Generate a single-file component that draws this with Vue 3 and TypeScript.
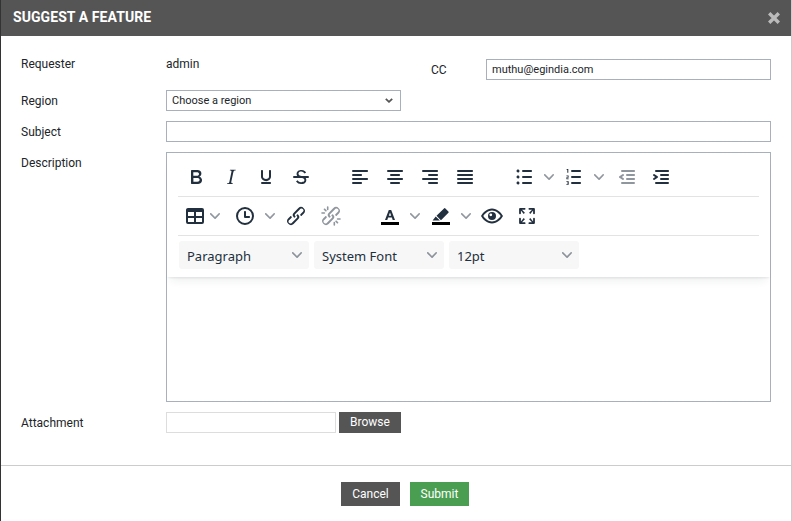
<script setup lang="ts">
interface Tool {
  d: string
  extra?: string
  bar?: boolean
  kind?: 'split' | 'menu'
  disabled?: boolean
  cls?: string
}

const chevron =
  'M8.7 2.2c.3-.3.8-.3 1 0 .4.4.4.9 0 1.2L5.7 7.8c-.3.3-.9.3-1.2 0L.2 3.4a.8.8 0 0 1 0-1.2c.3-.3.8-.3 1.1 0L5 6l3.7-3.8z'

const chain =
  'M6.2 12.3a1 1 0 0 1 1.4 1.4l-2 2a2 2 0 1 0 2.6 2.8l4.8-4.8a1 1 0 0 0 0-1.4 1 1 0 1 1 1.4-1.3 2.9 2.9 0 0 1 0 4L9.6 20a3.9 3.9 0 0 1-5.5-5.5l2-2zm11.6-.6a1 1 0 0 1-1.4-1.4l2-2a2 2 0 1 0-2.6-2.8L11 10.3a1 1 0 0 0 0 1.4 1 1 0 1 1-1.4 1.3 2.9 2.9 0 0 1 0-4L14.4 4a3.9 3.9 0 0 1 5.5 5.5l-2 2z'

const indentLines =
  'M7 5h12c.6 0 1 .4 1 1s-.4 1-1 1H7a1 1 0 1 1 0-2zm5 4h7c.6 0 1 .4 1 1s-.4 1-1 1h-7a1 1 0 0 1 0-2zm0 4h7c.6 0 1 .4 1 1s-.4 1-1 1h-7a1 1 0 0 1 0-2zm-5 4h12a1 1 0 0 1 0 2H7a1 1 0 0 1 0-2z'

const firstRow: { tight?: boolean; tools: Tool[] }[] = [
  {
    tools: [
      { d: 'M7.8 19c-.3 0-.5 0-.6-.2l-.2-.5V5.7c0-.2 0-.4.2-.5l.6-.2h5c1.5 0 2.7.3 3.5 1 .7.6 1.1 1.4 1.1 2.5a3 3 0 0 1-.6 1.9c-.4.6-1 1-1.6 1.2.4.1.9.3 1.3.6s.8.7 1 1.2c.4.4.5 1 .5 1.6 0 1.3-.4 2.3-1.3 3-.8.7-2.1 1-3.8 1H7.8zm5-8.3c.6 0 1.2-.1 1.6-.5.4-.3.6-.7.6-1.3 0-1.1-.8-1.7-2.4-1.7H9.3v3.5h3.4zm.5 6c.7 0 1.3-.1 1.7-.4.4-.4.6-.9.6-1.5s-.2-1-.7-1.4c-.4-.3-1-.4-2-.4H9.4v3.8h4z' },
      { d: 'M16.7 4.7l-.1.9h-.3c-.6 0-1 0-1.4.3-.3.3-.4.6-.5 1.1l-2.1 9.8v.6c0 .5.4.8 1.4.8h.2l-.2.8H8l.2-.8h.2c1.1 0 1.8-.5 2-1.5l2-9.8.1-.5c0-.6-.4-.8-1.4-.8h-.3l.2-.9h5.8z' },
      { d: 'M16 5c.6 0 1 .4 1 1v5.5a4 4 0 0 1-.4 1.8l-1 1.4a5.3 5.3 0 0 1-5.5 1 5 5 0 0 1-1.6-1c-.5-.4-.8-.9-1.1-1.4a4 4 0 0 1-.4-1.8V6c0-.6.4-1 1-1s1 .4 1 1v5.5c0 .3 0 .6.2 1l.6.7a3.3 3.3 0 0 0 2.2.8 3.4 3.4 0 0 0 2.2-.8c.3-.2.4-.5.6-.8l.2-.9V6c0-.6.4-1 1-1zM8 17h8c.6 0 1 .4 1 1s-.4 1-1 1H8a1 1 0 0 1 0-2z' },
      {
        d: 'M15.6 8.5c-.5-.7-1-1.1-1.3-1.3-.6-.4-1.3-.6-2-.6-2.7 0-2.8 1.7-2.8 2.1 0 1.6 1.8 2 3.2 2.3 4.4.9 4.6 2.8 4.6 3.9 0 1.4-.7 4.1-5 4.1A6.2 6.2 0 0 1 7 16.4l1.5-1.1c.4.6 1.6 2 3.7 2 1.6 0 2.5-.4 3-1.2.4-.8.3-2-.8-2.6-.7-.4-1.6-.7-2.9-1-1-.2-3.9-.8-3.9-3.6C7.6 6 10.3 5 12.4 5c2.9 0 4.2 1.6 4.7 2.4l-1.5 1.1z',
        extra: 'M5 11h14a1 1 0 0 1 0 2H5a1 1 0 0 1 0-2z',
      },
    ],
  },
  {
    tools: [
      { d: 'M5 5h14c.6 0 1 .4 1 1s-.4 1-1 1H5a1 1 0 1 1 0-2zm0 4h8c.6 0 1 .4 1 1s-.4 1-1 1H5a1 1 0 1 1 0-2zm0 8h8c.6 0 1 .4 1 1s-.4 1-1 1H5a1 1 0 0 1 0-2zm0-4h14c.6 0 1 .4 1 1s-.4 1-1 1H5a1 1 0 0 1 0-2z' },
      { d: 'M5 5h14c.6 0 1 .4 1 1s-.4 1-1 1H5a1 1 0 1 1 0-2zm3 4h8c.6 0 1 .4 1 1s-.4 1-1 1H8a1 1 0 1 1 0-2zm0 8h8c.6 0 1 .4 1 1s-.4 1-1 1H8a1 1 0 0 1 0-2zm-3-4h14c.6 0 1 .4 1 1s-.4 1-1 1H5a1 1 0 0 1 0-2z' },
      { d: 'M5 5h14c.6 0 1 .4 1 1s-.4 1-1 1H5a1 1 0 1 1 0-2zm6 4h8c.6 0 1 .4 1 1s-.4 1-1 1h-8a1 1 0 0 1 0-2zm0 8h8c.6 0 1 .4 1 1s-.4 1-1 1h-8a1 1 0 0 1 0-2zm-6-4h14c.6 0 1 .4 1 1s-.4 1-1 1H5a1 1 0 0 1 0-2z' },
      { d: 'M5 5h14c.6 0 1 .4 1 1s-.4 1-1 1H5a1 1 0 1 1 0-2zm0 4h14c.6 0 1 .4 1 1s-.4 1-1 1H5a1 1 0 1 1 0-2zm0 4h14c.6 0 1 .4 1 1s-.4 1-1 1H5a1 1 0 0 1 0-2zm0 4h14c.6 0 1 .4 1 1s-.4 1-1 1H5a1 1 0 0 1 0-2z' },
    ],
  },
  {
    tight: true,
    tools: [
      { kind: 'split', d: 'M11 5h8c.6 0 1 .4 1 1s-.4 1-1 1h-8a1 1 0 0 1 0-2zm0 6h8c.6 0 1 .4 1 1s-.4 1-1 1h-8a1 1 0 0 1 0-2zm0 6h8c.6 0 1 .4 1 1s-.4 1-1 1h-8a1 1 0 0 1 0-2zM4.5 6c0-.4.1-.8.4-1 .3-.4.7-.5 1.1-.5.4 0 .8.1 1 .4.4.3.5.7.5 1.1 0 .4-.1.8-.4 1-.3.4-.7.5-1.1.5-.4 0-.8-.1-1-.4-.4-.3-.5-.7-.5-1.1zm0 6c0-.4.1-.8.4-1 .3-.4.7-.5 1.1-.5.4 0 .8.1 1 .4.4.3.5.7.5 1.1 0 .4-.1.8-.4 1-.3.4-.7.5-1.1.5-.4 0-.8-.1-1-.4-.4-.3-.5-.7-.5-1.1zm0 6c0-.4.1-.8.4-1 .3-.4.7-.5 1.1-.5.4 0 .8.1 1 .4.4.3.5.7.5 1.1 0 .4-.1.8-.4 1-.3.4-.7.5-1.1.5-.4 0-.8-.1-1-.4-.4-.3-.5-.7-.5-1.1z' },
      { kind: 'split', d: 'M10 17h8c.6 0 1 .4 1 1s-.4 1-1 1h-8a1 1 0 0 1 0-2zm0-6h8c.6 0 1 .4 1 1s-.4 1-1 1h-8a1 1 0 0 1 0-2zm0-6h8c.6 0 1 .4 1 1s-.4 1-1 1h-8a1 1 0 1 1 0-2zM5.3 4h1v3.8h-1V5h-.8v-.6zM4.4 10.6h2.2v2.2H5.3v.8h1.4v.6H4.4v-2h1.3v-1H4.4zM4.4 16.2h2.3v3.6H4.4v-.7h1.3v-.8H4.9v-.6h.8v-.8H4.4z' },
      { disabled: true, cls: 'after-gap', d: indentLines + 'm1.6-3.8a1 1 0 0 1-1.2 1.6l-3-2a1 1 0 0 1 0-1.6l3-2a1 1 0 0 1 1.2 1.6L6.8 12l1.8 1.2z' },
      { d: indentLines + 'm-2.6-3.8L6.2 12l-1.8-1.2a1 1 0 0 1 1.2-1.6l3 2a1 1 0 0 1 0 1.6l-3 2a1 1 0 1 1-1.2-1.6z' },
    ],
  },
]

const secondRow: { tight?: boolean; tools: Tool[] }[] = [
  {
    tools: [
      { kind: 'menu', d: 'M19 4a2 2 0 0 1 2 2v12a2 2 0 0 1-2 2H5a2 2 0 0 1-2-2V6c0-1.1.9-2 2-2h14zM5 14v4h6v-4H5zm14 0h-6v4h6v-4zm0-6h-6v4h6V8zM5 12h6V8H5v4z' },
      { kind: 'split', d: 'M12 3a9 9 0 1 1 0 18 9 9 0 0 1 0-18zm0 2a7 7 0 1 0 0 14 7 7 0 0 0 0-14zM17 13c0 .6-.4 1-1 1h-4a1 1 0 0 1-1-1V8c0-.6.4-1 1-1s1 .4 1 1v4h3c.6 0 1 .4 1 1z' },
      { d: chain },
      {
        disabled: true,
        d: chain,
        extra: 'M7.6 6.3a.8.8 0 0 1-1.1 1.1L4.8 5.7a.8.8 0 0 1 1.1-1.1l1.7 1.7zM9.5 3v2.4a.8.8 0 0 1-1.6 0V3a.8.8 0 0 1 1.6 0zM3 8.2h2.4a.8.8 0 0 1 0 1.6H3a.8.8 0 0 1 0-1.6zM16.4 17.7a.8.8 0 0 1 1.1-1.1l1.7 1.7a.8.8 0 0 1-1.1 1.1l-1.7-1.7zM14.5 21v-2.4a.8.8 0 0 1 1.6 0V21a.8.8 0 0 1-1.6 0zM21 15.8h-2.4a.8.8 0 0 1 0-1.6H21a.8.8 0 0 1 0 1.6z',
      },
    ],
  },
  {
    tools: [
      { kind: 'split', bar: true, d: 'M7 16L10.8 6h2.4L17 16h-2.3l-.8-2.4h-3.8L9.3 16zM10.8 11.7h2.4L12 8.4z' },
      { kind: 'split', bar: true, d: 'M15 4.4a1 1 0 0 1 1.4 0l3 3a1 1 0 0 1 0 1.4l-7.4 7.4-4.5-4.5zM6.7 12.4l4.2 4.2H3.6z' },
      { d: 'M12 4.5C7 4.5 3 8.5 1 12c2 3.5 6 7.5 11 7.5s9-4 11-7.5c-2-3.5-6-7.5-11-7.5zm0 2c3.8 0 7 3 8.7 5.5-1.7 2.5-4.9 5.5-8.7 5.5S5 14.5 3.3 12C5 9.5 8.2 6.5 12 6.5zM12 8a4 4 0 1 1 0 8 4 4 0 0 1 0-8zm-1.2 1.4a1.4 1.4 0 1 0 0 2.8 1.4 1.4 0 0 0 0-2.8z' },
      { d: 'M15.3 10l-1.2-1.3 2.9-3h-2.3a.9.9 0 1 1 0-1.7H19c.5 0 .9.4.9.9v4.4a.9.9 0 1 1-1.8 0V6.6l-2.8 3.4zM8.7 10l1.2-1.3-2.9-3h2.3a.9.9 0 1 0 0-1.7H5c-.5 0-.9.4-.9.9v4.4a.9.9 0 1 0 1.8 0V6.6L8.7 10zM15.3 14l-1.2 1.3 2.9 3h-2.3a.9.9 0 1 0 0 1.7H19c.5 0 .9-.4.9-.9v-4.4a.9.9 0 1 0-1.8 0v2.7L15.3 14zM8.7 14l1.2 1.3-2.9 3h2.3a.9.9 0 1 1 0 1.7H5c-.5 0-.9-.4-.9-.9v-4.4a.9.9 0 1 1 1.8 0v2.7L8.7 14z' },
    ],
  },
]

const toolbarRows = [firstRow, secondRow]
const pickers = ['Paragraph', 'System Font', '12pt']
</script>

<template>
  <div class="modal">
    <header class="title-bar">
      <h1>SUGGEST A FEATURE</h1>
      <svg class="close" width="12" height="12" viewBox="0 0 12 12" aria-label="Close">
        <path d="M1.2 1.2l9.6 9.6M10.8 1.2l-9.6 9.6" />
      </svg>
    </header>

    <main class="form">
      <div class="row">
        <label class="label">Requester</label>
        <div class="first-line">
          <span class="value">admin</span>
          <label class="cc-label">CC</label>
          <input class="field cc-input" type="text" value="muthu@egindia.com" />
        </div>
      </div>

      <div class="row">
        <label class="label">Region</label>
        <div class="region-wrap">
          <select class="field region">
            <option>Choose a region</option>
          </select>
          <svg class="region-arrow" width="8" height="5" viewBox="0 0 8 5">
            <path d="M.8.8L4 3.8 7.2.8" />
          </svg>
        </div>
      </div>

      <div class="row">
        <label class="label">Subject</label>
        <input class="field wide" type="text" />
      </div>

      <div class="row">
        <label class="label">Description</label>
        <div class="editor">
          <div class="editor-head">
            <div v-for="(groups, r) in toolbarRows" :key="r" class="tool-row" :class="{ 'tool-row-first': r === 0 }">
              <div v-for="(group, g) in groups" :key="g" class="tool-group" :class="{ tight: group.tight }">
                <div
                  v-for="(tool, t) in group.tools"
                  :key="t"
                  class="tool"
                  :class="[tool.kind, tool.cls, { disabled: tool.disabled }]"
                >
                  <svg class="tool-icon" width="24" height="24" viewBox="0 0 24 24">
                    <path fill-rule="evenodd" :d="tool.d" />
                    <path v-if="tool.extra" :d="tool.extra" />
                    <rect v-if="tool.bar" class="bar" x="3" y="18" width="18" height="3" />
                  </svg>
                  <svg v-if="tool.kind" class="chev" width="10" height="10" viewBox="0 0 10 10">
                    <path :d="chevron" />
                  </svg>
                </div>
              </div>
            </div>
            <div class="picker-row">
              <div v-for="p in pickers" :key="p" class="picker">
                <span class="picker-text">{{ p }}</span>
                <svg class="chev" width="10" height="10" viewBox="0 0 10 10">
                  <path :d="chevron" />
                </svg>
              </div>
            </div>
          </div>
        </div>
      </div>

      <div class="row">
        <label class="label">Attachment</label>
        <div class="attach">
          <input class="file-name" type="text" />
          <button class="browse" type="button">Browse</button>
        </div>
      </div>
    </main>

    <footer class="actions">
      <button class="btn cancel" type="button">Cancel</button>
      <button class="btn submit" type="button">Submit</button>
    </footer>
  </div>
</template>

<style>
html,
body {
  margin: 0;
  background: #fff;
}
</style>

<style scoped>
.modal {
  width: 792px;
  height: 521px;
  box-sizing: border-box;
  display: flex;
  flex-direction: column;
  overflow: hidden;
  background: #fff;
  border-left: 1px solid #333;
  border-right: 1px solid #ccc;
  font-family: Roboto, "Liberation Sans", sans-serif;
  font-size: 12px;
  color: #212529;
}
.title-bar {
  height: 36px;
  flex: none;
  margin: 0 -1px 0 0;
  display: flex;
  align-items: center;
  justify-content: space-between;
  padding: 0 12px;
  background: #555;
}
.title-bar h1 {
  margin: 0 0 2px;
  font-size: 14px;
  font-weight: 700;
  letter-spacing: 0.07px;
  color: #fff;
}
.close {
  fill: none;
  stroke: #bbb;
  stroke-width: 3.4;
}
.form {
  flex: 1;
  display: flex;
  flex-direction: column;
  gap: 10px;
  padding: 17px 20px 0;
}
.row {
  display: flex;
  align-items: flex-start;
}
.label {
  width: 145px;
  height: 21px;
  flex: none;
  line-height: 23px;
}
.first-line {
  flex: 1;
  display: flex;
  align-items: flex-start;
}
.value {
  width: 265px;
  height: 21px;
  line-height: 23px;
}
.cc-label {
  width: 55px;
  height: 21px;
  margin-top: 6px;
  line-height: 23px;
}
.field {
  height: 21px;
  box-sizing: border-box;
  border: 1px solid #a9b0bd;
  border-radius: 0;
  background: #fff;
  font: 11px Roboto, "Liberation Sans", sans-serif;
  color: #212529;
  outline: none;
}
.cc-input {
  flex: 1;
  min-width: 0;
  margin-top: 6px;
  padding: 0 5px;
}
.region-wrap {
  position: relative;
  width: 235px;
  height: 21px;
}
.region {
  display: block;
  width: 100%;
  padding: 0 5px;
  appearance: none;
}
.region-arrow {
  position: absolute;
  top: 8px;
  right: 8px;
  fill: none;
  stroke: #555;
  stroke-width: 1.8;
  pointer-events: none;
}
.wide {
  flex: 1;
  min-width: 0;
}
.editor {
  flex: 1;
  height: 250px;
  box-sizing: border-box;
  border: 1px solid #a9b0bd;
  background: #fff;
}
.editor-head {
  box-shadow: 0 2px 2px -1px rgba(34, 47, 62, 0.1), 0 8px 8px -4px rgba(34, 47, 62, 0.07);
  padding: 0 11px;
}
.tool-row {
  display: flex;
  gap: 25px;
  padding: 2px 0 2px 1px;
  border-bottom: 1px solid #e3e3e3;
}
.tool-row-first {
  padding-top: 7px;
}
.tool-group {
  display: flex;
  gap: 1px;
}
.tool-group.tight {
  gap: 0;
}
.tool {
  height: 34px;
  width: 34px;
  flex: none;
  display: flex;
  align-items: center;
  justify-content: center;
  fill: #222f3e;
}
.bar {
  fill: #000;
}
.tool.split {
  width: 50px;
  justify-content: flex-start;
  padding-left: 5px;
  box-sizing: border-box;
}
.tool.split .chev {
  margin-left: 8px;
}
.tool.menu {
  width: 48px;
  justify-content: flex-start;
  padding-left: 4px;
  box-sizing: border-box;
}
.tool.menu .chev {
  margin-left: 3px;
}
.tool.disabled .tool-icon {
  opacity: 0.5;
}
.tool.after-gap {
  margin-left: 3px;
}
.chev {
  flex: none;
  fill: rgba(34, 47, 62, 0.5);
}
.picker-row {
  display: flex;
  gap: 5px;
  padding: 5px 0 8px 1px;
}
.picker {
  width: 130px;
  height: 28px;
  box-sizing: border-box;
  display: flex;
  align-items: center;
  justify-content: space-between;
  padding: 0 7px 0 8px;
  border-radius: 3px;
  background: #f7f7f7;
  font-family: "Noto Sans", sans-serif;
  font-size: 13px;
  color: #222f3e;
}
.picker-text {
  margin-top: 2px;
}
.attach {
  display: flex;
  gap: 3px;
}
.file-name {
  width: 170px;
  height: 21px;
  box-sizing: border-box;
  border: 1px solid #ddd;
  outline: none;
}
.browse {
  width: 62px;
  height: 21px;
  padding: 0 0 1px;
  border: 0;
  background: #555;
  color: #fff;
  font: 12px Roboto, "Liberation Sans", sans-serif;
}
.actions {
  height: 56px;
  flex: none;
  box-sizing: border-box;
  display: flex;
  justify-content: center;
  gap: 10px;
  padding: 16px 0 0 18px;
  border-top: 1px solid #ccc;
}
.btn {
  width: 59px;
  height: 24px;
  padding: 0;
  border: 0;
  color: #fff;
  font: 12px Roboto, "Liberation Sans", sans-serif;
}
.cancel {
  background: #555;
}
.submit {
  background: #4a9e51;
}
</style>
